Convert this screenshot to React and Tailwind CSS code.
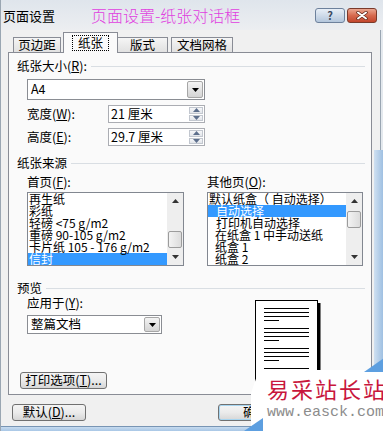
import React from "react";

const listA = [
  { text: "再生纸", pad: "pl-[1px]" },
  { text: "彩纸", pad: "pl-[1px]" },
  { text: "轻磅 <75 g/m2", pad: "pl-[1px]" },
  { text: "重磅 90-105 g/m2", pad: "pl-[1px]" },
  { text: "卡片纸 105 - 176 g/m2", pad: "pl-[1px]" },
  { text: "信封", selected: true, pad: "pl-[1px]" },
];

const listB = [
  { text: "默认纸盒（ 自动选择）", pad: "pl-[1px]" },
  { text: "自动选择", selected: true, pad: "pl-[8px]" },
  { text: "打印机自动选择", pad: "pl-[8px]" },
  { text: "在纸盒 1 中手动送纸", pad: "pl-[7px]" },
  { text: "纸盒 1", pad: "pl-[7px]" },
  { text: "纸盒 2", pad: "pl-[7px]" },
];

function Key({ k }) {
  return <span className="underline">{k}</span>;
}

function Arrow({ up = false, color = "#000" }) {
  return (
    <svg width="7" height="4" viewBox="0 0 7 4">
      <polygon points={up ? "0,4 7,4 3.5,0" : "0,0 7,0 3.5,4"} fill={color} />
    </svg>
  );
}

function DropButton() {
  return (
    <div className="w-[16px] m-[1px] flex items-center justify-center border border-[#a6a6a6] rounded-[2px] bg-gradient-to-b from-[#f4f4f4] to-[#d4d4d4]">
      <Arrow />
    </div>
  );
}

function Spinner() {
  return (
    <div className="w-[14px] m-[1px] flex flex-col gap-[1px]">
      <div className="flex-1 flex items-center justify-center border border-[#c2c7cf] bg-gradient-to-b from-[#f6f7f9] to-[#e2e5ea]">
        <Arrow up color="#5d6f8c" />
      </div>
      <div className="flex-1 flex items-center justify-center border border-[#c2c7cf] bg-gradient-to-b from-[#f6f7f9] to-[#e2e5ea]">
        <Arrow color="#5d6f8c" />
      </div>
    </div>
  );
}

function Section({ title }) {
  return (
    <div className="h-[14px] flex items-center">
      <span className="leading-none whitespace-nowrap">{title}</span>
      <div className="flex-1 h-px bg-[#d9dee3] ml-[4px] mr-[6px]" />
    </div>
  );
}

function ListBox({ items, width, thumbTop }) {
  return (
    <div className={`${width} h-[74px] border border-[#828790] bg-white flex`}>
      <div className="flex-1 overflow-hidden text-[12px]">
        {items.map((it) => (
          <div
            key={it.text}
            className={`h-[12px] leading-[12px] whitespace-nowrap ${it.pad || ""} ${
              it.selected ? "bg-[#3399ff] text-white" : ""
            }`}
          >
            {it.text}
          </div>
        ))}
      </div>
      <div className="w-[16px] bg-[#eeeeee] flex flex-col">
        <div className="h-[16px] flex items-center justify-center">
          <Arrow up color="#333" />
        </div>
        <div className="flex-1 flex flex-col">
          <div className={thumbTop} />
          <div className="h-[17px] mx-[1px] border border-[#9c9c9c] rounded-[2px] bg-gradient-to-r from-[#f3f3f3] to-[#dcdcdc]" />
        </div>
        <div className="h-[16px] flex items-center justify-center">
          <Arrow color="#333" />
        </div>
      </div>
    </div>
  );
}

function Button({ children, className = "" }) {
  return (
    <div
      className={`h-[17px] flex items-center justify-center border border-[#707070] rounded-[3px] bg-gradient-to-b from-[#f4f4f4] via-[#ebebeb] to-[#d6d6d6] leading-none whitespace-nowrap ${className}`}
    >
      {children}
    </div>
  );
}

function PagePreview() {
  const groups = [8, 28, 48, 68];
  return (
    <svg width="66" height="92" viewBox="0 0 66 92">
      <rect x="0.5" y="0.5" width="62" height="90" fill="#fff" stroke="#000" />
      <rect x="63" y="3" width="2.5" height="89" fill="#000" />
      {groups.map((g) => (
        <g key={g} stroke="#000" strokeWidth="1">
          <line x1="9" y1={g + 0.5} x2="54" y2={g + 0.5} />
          <line x1="9" y1={g + 4.5} x2="54" y2={g + 4.5} />
          <line x1="9" y1={g + 8.5} x2="54" y2={g + 8.5} />
          <line x1="9" y1={g + 12.5} x2="24" y2={g + 12.5} />
        </g>
      ))}
    </svg>
  );
}

export default function App() {
  return (
    <div className="relative w-[383px] h-[431px] overflow-hidden bg-[#f0f0f0] border-l border-[#9aa6b2] flex flex-col font-['Noto_Sans_CJK_SC',sans-serif] text-[12.5px] text-black">
      {/* title bar */}
      <div className="h-[30px] flex items-center bg-gradient-to-b from-[#dfe5ec] to-[#eceef1] pl-[2px] pr-[6px]">
        <span className="text-[13px] leading-none">页面设置</span>
        <span className="ml-[36px] text-[16px] leading-none font-light text-[#e03fe0]">
          页面设置-纸张对话框
        </span>
        <div className="flex-1" />
        <div className="w-[30px] h-[15px] flex items-center justify-center rounded-[3px] border border-[#6d819c] bg-gradient-to-b from-[#e8eff7] via-[#cfdbe9] to-[#b3c6dc] text-[11px] font-bold leading-none text-[#3b4a5e]">
          ?
        </div>
        <div className="ml-[2px] w-[30px] h-[15px] flex items-center justify-center rounded-[3px] border border-[#7a3a2b] bg-gradient-to-b from-[#eaa690] via-[#d66a4f] to-[#c2452c]">
          <svg width="12" height="9" viewBox="0 0 12 9">
            <path d="M2 1.5 L10 7.5 M10 1.5 L2 7.5" stroke="#5a2418" strokeWidth="3.4" strokeLinecap="round" />
            <path d="M2 1.5 L10 7.5 M10 1.5 L2 7.5" stroke="#fff" strokeWidth="2" strokeLinecap="round" />
          </svg>
        </div>
      </div>

      <div className="flex-1 flex">
        {/* main */}
        <div className="w-[373px] pl-[7px] flex flex-col">
          {/* tabs */}
          <div className="relative z-10 h-[22px] pl-[5px] flex items-end">
            <div className="w-[48px] h-[15px] flex items-center justify-center border border-b-0 border-[#898c95] bg-gradient-to-b from-[#f5f5f5] to-[#e1e1e1] leading-none">
              页边距
            </div>
            <div className="ml-[2px] -mb-px w-[55px] h-[21px] flex items-center justify-center border border-b-0 border-[#898c95] bg-[#fafafa]">
              <span className="px-[5px] py-[1px] border border-dotted border-black leading-[12px]">纸张</span>
            </div>
            <div className="w-[50px] h-[15px] flex items-center justify-center border border-b-0 border-l-0 border-[#898c95] bg-gradient-to-b from-[#f5f5f5] to-[#e1e1e1] leading-none">
              版式
            </div>
            <div className="ml-[3px] w-[62px] h-[15px] flex items-center justify-center border border-b-0 border-[#898c95] bg-gradient-to-b from-[#f5f5f5] to-[#e1e1e1] leading-none">
              文档网格
            </div>
          </div>

          {/* panel */}
          <div className="w-[364px] h-[343px] border border-[#898c95] bg-[#fafafa] pl-[8px] flex flex-col">
            <div className="mt-[6px]">
              <Section
                title={
                  <>
                    纸张大小(<Key k="R" />):
                  </>
                }
              />
            </div>
            <div className="mt-[6px] ml-[10px] w-[178px] h-[21px] border border-[#8a8d93] bg-white flex">
              <span className="flex-1 pl-[3px] self-center leading-none">A4</span>
              <DropButton />
            </div>
            <div className="mt-[5px] ml-[10px] h-[18px] flex items-center">
              <span className="w-[81px] leading-none">
                宽度(<Key k="W" />):
              </span>
              <div className="w-[97px] h-full border border-[#abadb3] bg-white flex">
                <span className="flex-1 pl-[2px] self-center leading-none">21 厘米</span>
                <Spinner />
              </div>
            </div>
            <div className="mt-[5px] ml-[10px] h-[18px] flex items-center">
              <span className="w-[81px] leading-none">
                高度(<Key k="E" />):
              </span>
              <div className="w-[97px] h-full border border-[#abadb3] bg-white flex">
                <span className="flex-1 pl-[2px] self-center leading-none">29.7 厘米</span>
                <Spinner />
              </div>
            </div>

            <div className="mt-[10px]">
              <Section title="纸张来源" />
            </div>
            <div className="mt-[5px] ml-[10px] h-[14px] flex items-center leading-none">
              <span className="w-[180px]">
                首页(<Key k="F" />):
              </span>
              <span>
                其他页(<Key k="O" />):
              </span>
            </div>
            <div className="mt-[3px] ml-[10px] flex gap-[23px]">
              <ListBox items={listA} width="w-[157px]" thumbTop="h-[22px]" />
              <ListBox items={listB} width="w-[156px]" thumbTop="h-[2px]" />
            </div>

            <div className="mt-[15px]">
              <Section title="预览" />
            </div>
            <div className="flex">
              <div className="pl-[10px] flex flex-col">
                <div className="mt-[1px] h-[14px] flex items-center leading-none">
                  应用于(<Key k="Y" />):
                </div>
                <div className="mt-[5px] w-[135px] h-[19px] border border-[#8a8d93] bg-white flex">
                  <span className="flex-1 pl-[3px] self-center leading-none">整篇文档</span>
                  <DropButton />
                </div>
                <Button className="mt-[38px] -ml-[7px] w-[87px]">
                  打印选项(<Key k="T" />)...
                </Button>
              </div>
              <div className="ml-[93px] mt-[5px]">
                <PagePreview />
              </div>
            </div>
          </div>

          {/* bottom buttons */}
          <div className="mt-[9px] pl-[4px] flex">
            <Button className="w-[74px]">
              默认(<Key k="D" />)...
            </Button>
            <Button className="ml-[132px] w-[75px] border-[#3c7fb1] shadow-[inset_0_0_0_1px_#a7d5f0]">
              确定
            </Button>
            <Button className="ml-[6px] w-[75px]">取消</Button>
          </div>
        </div>

        {/* right frame */}
        <div className="w-[9px] flex flex-col">
          <div className="h-[120px] flex">
            <div className="w-[6px] bg-[#f0f0f0]" />
            <div className="w-[1px] bg-[#9aa6b2]" />
            <div className="w-[2px] bg-[#e4e9ee]" />
          </div>
          <div className="flex-1 bg-gradient-to-r from-[#cfe0f1] to-[#9fc0e2]" />
        </div>
      </div>

      {/* bottom frame */}
      <div className="h-[5px] border-t border-[#7895b4] bg-gradient-to-b from-[#c7dbef] to-[#a9c7e6]" />

      {/* watermark */}
      <div className="absolute left-[240px] top-[356px] w-[143px] h-[75px]">
        <svg className="absolute inset-0" width="143" height="75" viewBox="0 0 143 75">
          <polygon points="18,14 143,14 143,75 10,75 10,37" fill="#fff" />
          <polygon points="123,16 143,2 143,16" fill="#5d9fe0" />
          <polygon points="3,75 22,62 22,75" fill="#5d9fe0" />
        </svg>
        <div className="relative pl-[26px] pt-[19px] flex flex-col">
          <span className="text-[22px] leading-[26px] tracking-[2px] whitespace-nowrap text-[#c8163c]">
            易采站长站
          </span>
          <span className="mt-[4px] font-['Liberation_Mono',monospace] text-[15px] leading-[16px] whitespace-nowrap text-[#8c8c8c]">
            www.easck.com
          </span>
        </div>
      </div>
    </div>
  );
}
